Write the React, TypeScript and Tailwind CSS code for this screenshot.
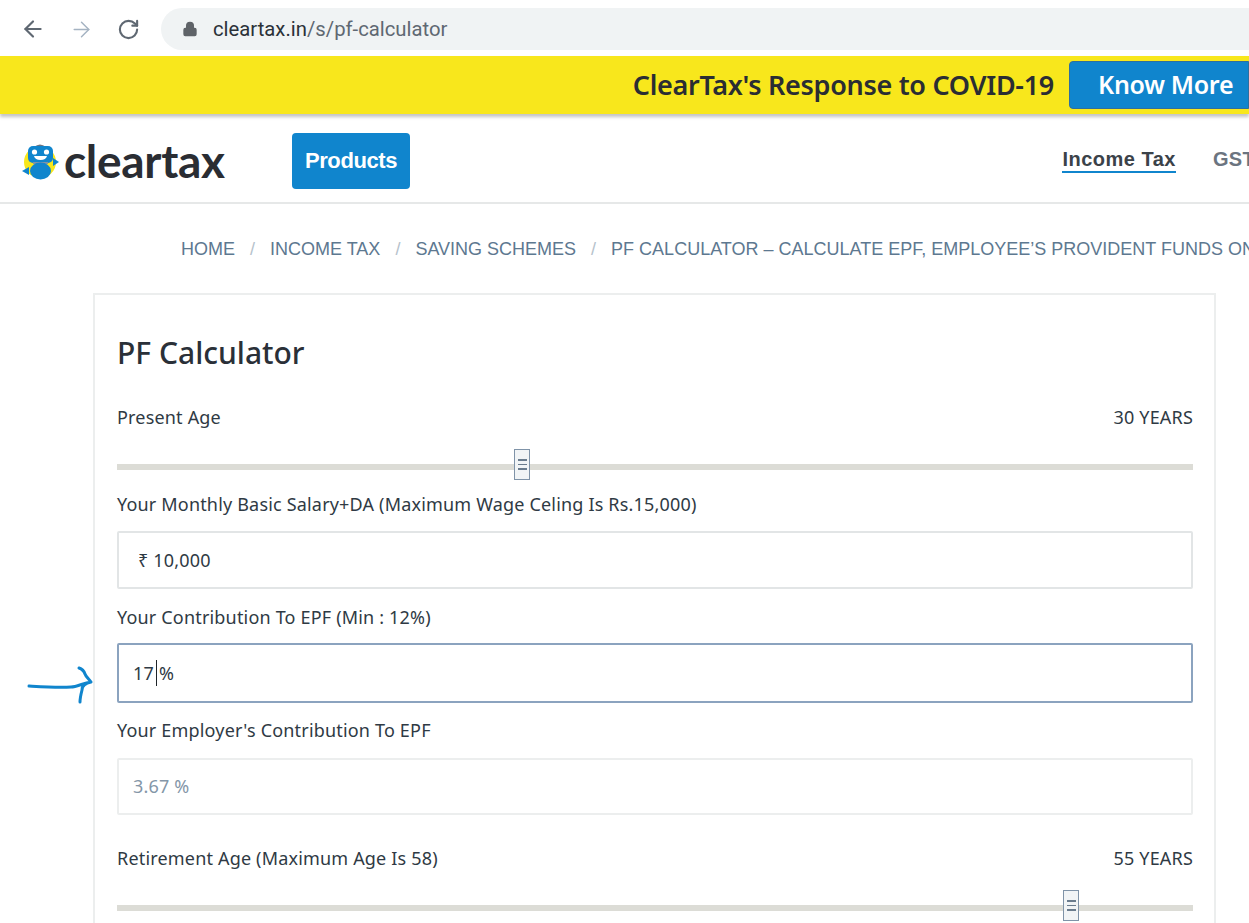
import { ArrowLeft, ArrowRight, Lock, RotateCw } from "lucide-react";

const bodyFont = "font-['Noto_Sans','Open_Sans',sans-serif]";

function Bot() {
  return (
    <svg width="38" height="38" viewBox="0 0 38 38">
      <circle cx="18" cy="20" r="16" fill="#f8e71c" />
      <path d="M12 5q6-5 12 0z" fill="#6b7280" />
      <rect x="6" y="4" width="25" height="17" rx="5" fill="#1085cd" />
      <circle cx="12.500" cy="10" r="2.600" fill="#fff" />
      <circle cx="24.500" cy="10" r="2.600" fill="#fff" />
      <path d="M12 14h13q-1 4-6.500 4T12 14z" fill="#fff" />
      <rect x="11" y="20" width="15" height="2" fill="#7f93a8" />
      <ellipse cx="18.500" cy="29" rx="10.500" ry="8.500" fill="#1085cd" />
      <path d="M0 29l7-4v8zM37 20l-6-4v8z" fill="#1085cd" />
    </svg>
  );
}

function Thumb({ left }: { left: number }) {
  return (
    <div
      className="absolute top-[-15px] flex h-[31px] w-[16px] flex-col items-center justify-center gap-[3px] border border-[#7f93a8] bg-[#f1f4f6]"
      style={{ left }}
    >
      <span className="h-[2px] w-[9px] bg-[#6a7c8e]" />
      <span className="h-px w-[9px] bg-[#6a7c8e]" />
      <span className="h-[2px] w-[9px] bg-[#6a7c8e]" />
    </div>
  );
}

function SliderRow({ label, value, thumb }: { label: string; value: string; thumb: number }) {
  return (
    <div>
      <div className="flex items-center justify-between text-[18px] leading-[24px] tracking-[0.18px] text-[#2f3a44]">
        <span>{label}</span>
        <span>{value}</span>
      </div>
      <div className="relative mt-[35px] h-[6px] bg-[#dcdcd6]">
        <Thumb left={thumb} />
      </div>
    </div>
  );
}

function Field({ label, children, className }: { label: string; children: React.ReactNode; className: string }) {
  return (
    <div>
      <div className="text-[18px] leading-[24px] tracking-[0.18px] text-[#2f3a44]">{label}</div>
      <div className={`flex items-center rounded-[2px] bg-white text-[18px] tracking-[0.18px] ${className}`}>{children}</div>
    </div>
  );
}

export default function App() {
  return (
    <div className={`h-[923px] w-[1249px] overflow-hidden bg-white ${bodyFont}`}>
      <div className="flex h-[56px] items-center pt-[2px] pl-[20px]">
        <ArrowLeft size={26} strokeWidth={2} className="text-[#5f6872]" />
        <ArrowRight size={25} strokeWidth={1.400} className="ml-[23px] text-[#a5b3c2]" />
        <RotateCw size={23} strokeWidth={2.200} className="ml-[23px] text-[#5f6872]" />
        <div className="ml-[21px] flex h-[42px] flex-1 items-center rounded-l-full bg-[#f0f3f4] pl-[21px]">
          <Lock size={16} fill="#5f6368" className="text-[#5f6368]" />
          <span className="ml-[15px] font-['Roboto',sans-serif] text-[20.300px] text-[#5f6872]">
            <span className="text-[#2b3138]">cleartax.in</span>/s/pf-calculator
          </span>
        </div>
      </div>

      <div className="flex h-[58px] items-center justify-end bg-[#f8e71c] shadow-[0_3px_3px_rgba(90,90,90,0.35)]">
        <span className="mr-[15px] text-[27px] font-semibold tracking-[-0.3px] text-[#2a2d33]">
          ClearTax's Response to COVID-19
        </span>
        <div className="flex h-[48px] w-[180px] items-center rounded-l-[4px] border border-[#2f6f9f] bg-[#1085cd] pl-[28px] text-[25px] font-semibold tracking-[-0.3px] text-white">
          Know More
        </div>
      </div>

      <header className="flex h-[90px] items-center border-b-2 border-[#e6e8e8] pt-[5px] font-['Liberation_Sans',sans-serif]">
        <div className="ml-[22px] flex w-[205px] items-center">
          <Bot />
          <span className="ml-[4px] font-['Lato',sans-serif] text-[46px] leading-none font-bold tracking-[-0.3px] text-[#2a2d33]">
            cleartax
          </span>
        </div>
        <div className="ml-[65px] flex h-[56px] w-[118px] items-center justify-center rounded-[4px] bg-[#1085cd] text-[22px] font-bold tracking-[-0.4px] text-white">
          Products
        </div>
        <div className="ml-auto flex items-center pb-[2px]">
          <span className="border-b-2 border-[#1085cd] text-[20px] leading-[24px] font-bold tracking-[0.5px] text-[#3b4249]">
            Income Tax
          </span>
          <span className="ml-[37px] w-[36px] overflow-hidden pb-[2px] text-[20px] leading-[24px] font-bold tracking-[0.3px] text-[#6b7480]">
            GST
          </span>
        </div>
      </header>

      <nav className="mt-[33px] flex pl-[181px] font-['Liberation_Sans',sans-serif] text-[18px] leading-[24px] whitespace-nowrap text-[#5d7890]">
        <span>HOME</span>
        <span className="mx-[15px] text-[#b6c2cc]">/</span>
        <span>INCOME TAX</span>
        <span className="mx-[15px] text-[#b6c2cc]">/</span>
        <span>SAVING SCHEMES</span>
        <span className="mx-[15px] text-[#b6c2cc]">/</span>
        <span>PF CALCULATOR – CALCULATE EPF, EMPLOYEE’S PROVIDENT FUNDS ONLINE</span>
      </nav>

      <main className="mt-[32px] ml-[93px] h-[640px] w-[1123px] border-2 border-b-0 border-[#eceeee] pt-[34px] pr-[21px] pl-[22px]">
        <h1 className="text-[30px] leading-[48px] font-medium text-[#2a3038]">PF Calculator</h1>
        <div className="mt-[28px] flex flex-col">
          <SliderRow label="Present Age" value="30 YEARS" thumb={397} />
          <div className="mt-[22px]">
            <Field label="Your Monthly Basic Salary+DA (Maximum Wage Celing Is Rs.15,000)" className="mt-[15px] h-[58px] border-2 border-[#e2e5e6] pl-[19px] text-[#2f3a44]">
              ₹ 10,000
            </Field>
          </div>
          <div className="mt-[16px]">
            <Field label="Your Contribution To EPF (Min : 12%)" className="mt-[14px] h-[60px] border-2 border-[#8ba3bf] pl-[14px] text-[#2f3a44]">
              17<span className="mx-[2px] h-[26px] w-px bg-[#1f2429]" />%
            </Field>
          </div>
          <div className="mt-[15px]">
            <Field label="Your Employer's Contribution To EPF" className="mt-[16px] h-[57px] border-2 border-[#eceeee] pl-[14px] text-[#8496a8]">
              3.67 %
            </Field>
          </div>
          <div className="mt-[31px]">
            <SliderRow label="Retirement Age (Maximum Age Is 58)" value="55 YEARS" thumb={946} />
          </div>
        </div>
      </main>

      <svg className="absolute top-[660px] left-[26px]" width="70" height="50" viewBox="0 0 70 50" fill="none">
        <path d="M3 26c16 1 30 2 42 1 6 0 12-4 20-5M53 8c3 1 5 3 6 6 1 3 4 5 6 8-5 1-9 3-9 8-1 4-2 8-2 12" stroke="#1085cd" strokeWidth="3" strokeLinecap="round" strokeLinejoin="round" />
      </svg>
    </div>
  );
}
